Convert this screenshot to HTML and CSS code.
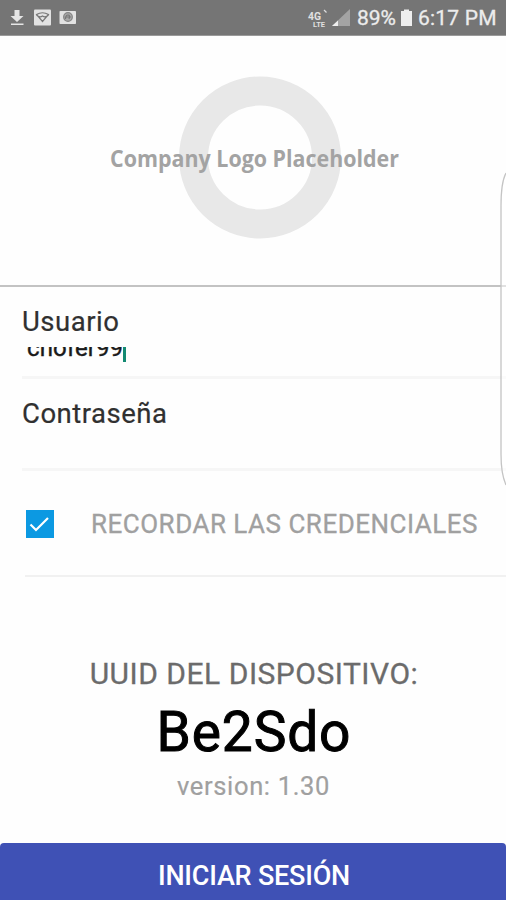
FILE: index.html
```html
<!DOCTYPE html>
<html lang="es">
<head>
<meta charset="utf-8">
<title>Iniciar sesión</title>
<link rel="stylesheet" href="styles.css">
</head>
<body>
<div class="screen">
  <header class="status">
    <svg class="status-left" width="90" height="35" viewBox="0 0 90 35">
      <path d="M14.500 10h5v6h4L17 22l-6.500-6h4zM11 23.500h12.500v1.600H11z" fill="#e6e6e6"/>
      <rect x="34" y="9.500" width="17" height="16" rx="1" fill="#e2e2e2"/>
      <path d="M36.500 14.500q6-3.500 12 0l-6 7zM36.500 15q3 3 6 1q3 2 6-1" fill="none" stroke="#777" stroke-width="1.200"/>
      <rect x="59.500" y="11" width="16.500" height="13" rx=".8" fill="#e2e2e2"/>
      <circle cx="68" cy="17" r="4.300" fill="#aaa" stroke="#858585" stroke-width="1.300"/>
      <path d="M65.500 19q0-4 2.500-4t1 4M66 17h5" fill="none" stroke="#777" stroke-width="1.200"/>
    </svg>
    <svg class="status-signal" width="46" height="35" viewBox="0 0 46 35">
      <text class="net" x="3" y="20" textLength="13" lengthAdjust="spacingAndGlyphs">4G</text>
      <text class="lte" x="8" y="27" textLength="12" lengthAdjust="spacingAndGlyphs">LTE</text>
      <path d="M19 10l2.500 2.500" stroke="#ddd" stroke-width="1.200"/>
      <path d="M27 26L45 9v17z" fill="#a3a3a3"/>
      <path d="M27 26l6-5.500V26z" fill="#eee"/>
    </svg>
    <span class="battery-text">89%</span>
    <svg class="battery" width="13" height="35" viewBox="0 0 13 35"><path d="M4 9.500h5v1.500h3V26H1V11h3z" fill="#eee"/></svg>
    <span class="clock">6:17 PM</span>
  </header>

  <div class="logo">
    <svg width="506" height="249" viewBox="0 36 506 249">
      <circle cx="260" cy="157.500" r="66.500" fill="none" stroke="#e8e8e8" stroke-width="29"/>
      <text class="logo-text" x="110" y="166.500" textLength="289" lengthAdjust="spacingAndGlyphs">Company Logo Placeholder</text>
    </svg>
  </div>

  <main class="form">
    <div class="field">
      <label class="label">Usuario</label>
      <div class="input"><span class="value">chofer99</span><i class="caret"></i></div>
    </div>
    <div class="field second">
      <label class="label">Contraseña</label>
    </div>
    <div class="remember">
      <svg class="check" width="28" height="28" viewBox="0 0 28 28"><rect width="28" height="28" fill="#0c99e2"/><path d="M4.500 14.500l5.500 5.500L22 8" fill="none" stroke="#fff" stroke-width="2.200"/></svg>
      <span class="remember-text">RECORDAR LAS CREDENCIALES</span>
    </div>
  </main>

  <section class="device">
    <div class="uuid">UUID DEL DISPOSITIVO:</div>
    <div class="code">Be2Sdo</div>
    <div class="version">version: 1.30</div>
  </section>

  <button class="login"><span>INICIAR SESIÓN</span></button>

  <svg class="edge" width="8" height="320" viewBox="0 0 8 320"><path d="M8 1Q3 10 3 34V282Q3 302 8 313" fill="#fff" fill-opacity=".5" stroke="#c4c4c4" stroke-width="1.300"/></svg>
</div>
</body>
</html>
```
FILE: styles.css
```css
* { box-sizing: border-box; }
body { margin: 0; background: #fefefe; font-family: Roboto, sans-serif; }
.screen { position: relative; width: 506px; height: 900px; overflow: hidden; display: flex; flex-direction: column; background: #fefefe; white-space: nowrap; }
.status { height: 36px; flex: none; display: flex; background: #757575; border-bottom: 1px solid #9a9a9a; color: #ececec; font-size: 21px; line-height: 37px; -webkit-text-stroke: .3px #ececec; }
.status svg { flex: none; }
.status-signal { margin-left: 215px; -webkit-text-stroke: 0; }
.net, .lte { font-family: Roboto, sans-serif; font-weight: 700; fill: #e0e0e0; }
.net { font-size: 10px; }
.lte { font-size: 8px; }
.battery-text { width: 43px; margin-left: 6px; }
.clock { margin-left: 5px; letter-spacing: .2px; }
.logo { height: 249px; flex: none; }
.logo svg { display: block; }
.logo-text { font-family: "Open Sans", sans-serif; font-weight: 700; font-size: 23.5px; fill: #a3a3a3; }
.form { flex: none; border-top: 2px solid #c3c3c3; height: 293px; }
.field { margin-left: 22px; height: 92px; border-bottom: 3px solid #f6f6f6; padding-top: 19px; color: #303030; }
.label { display: block; font-size: 27.5px; line-height: 32px; height: 32px; letter-spacing: .5px; -webkit-text-stroke: .2px #303030; }
.input { height: 24px; margin-top: 9px; padding-left: 5px; display: flex; overflow: hidden; color: #1a1a1a; }
.value { font-size: 24px; line-height: 28px; margin-top: -13px; letter-spacing: .1px; -webkit-text-stroke: .4px #1a1a1a; }
.caret { width: 3px; height: 15px; background: #138a72; }
.remember { margin-left: 25px; padding: 1px 0 0 1px; height: 106px; display: flex; align-items: center; border-bottom: 2px solid #f1f1f1; }
.remember-text { margin-left: 37px; padding-top: 1px; font-size: 26px; color: #a0a0a0; letter-spacing: .5px; -webkit-text-stroke: .3px #a0a0a0; }
.device { display: flex; flex-direction: column; align-items: center; height: 265px; padding-top: 78px; flex: none; }
.uuid { font-size: 30px; line-height: 36px; color: #6b6b6b; letter-spacing: .5px; padding-left: 2px; -webkit-text-stroke: .3px #6b6b6b; }
.code { font-size: 55px; line-height: 64px; color: #000; margin-top: 8px; letter-spacing: .9px; padding-left: 2px; -webkit-text-stroke: 1px #000; }
.version { font-size: 25.5px; line-height: 30px; color: #a0a0a0; margin-top: 7px; letter-spacing: .65px; padding-left: 1px; -webkit-text-stroke: .2px #a0a0a0; }
.login { flex: 1; border: 0; border-radius: 4px 4px 0 0; background: #3f51b5; color: #fff; font: 500 27px/32px Roboto, sans-serif; letter-spacing: -.2px; padding: 9px 0 0 2px; }
.edge { position: absolute; right: 0; top: 172px; }
```
